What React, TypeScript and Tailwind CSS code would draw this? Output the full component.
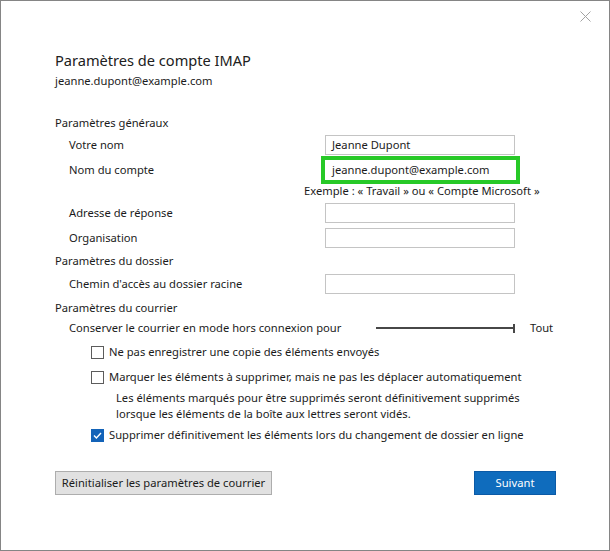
import React from "react";

function Field({ label, value }: { label: string; value?: string }) {
  return (
    <div className="flex h-[20px] items-center">
      <div className="w-[270px] pl-[14px]">{label}</div>
      <div className="flex h-[20px] w-[190px] items-center border border-[#c4c4c4] bg-white pl-[6px]">
        {value}
      </div>
    </div>
  );
}

function Check({ checked, label }: { checked?: boolean; label: string }) {
  return (
    <div className="flex h-[20px] items-center pl-[36px]">
      {checked ? (
        <span className="flex h-[13px] w-[13px] items-center justify-center bg-[#1363b8]">
          <svg width="9" height="7" viewBox="0 0 9 7" fill="none">
            <path d="M1 3.6 L3.4 6 L8 1" stroke="white" strokeWidth="1.4" />
          </svg>
        </span>
      ) : (
        <span className="h-[13px] w-[13px] border border-[#5c5c5c] bg-white" />
      )}
      <span className="ml-[5px]">{label}</span>
    </div>
  );
}

export default function App() {
  return (
    <div
      className="relative h-[551px] w-[610px] border border-[#858585] bg-white text-[11.2px] text-[#1b1b1b]"
      style={{ fontFamily: '"Noto Sans", "Open Sans", sans-serif' }}
    >
      {/* close */}
      <svg className="absolute right-[18px] top-[10px]" width="11" height="11" viewBox="0 0 11 11">
        <path d="M0.5 0.5 L10.5 10.5 M10.5 0.5 L0.5 10.5" stroke="#a3a3a3" strokeWidth="1" />
      </svg>

      <div className="flex flex-col pl-[54px] pt-[48px]">
        <div className="h-[22px] text-[14.6px] leading-[22px] text-[#202020]">Paramètres de compte IMAP</div>
        <div className="mt-[2px] h-[16px] leading-[16px]">jeanne.dupont@example.com</div>

        <div className="mt-[24px] flex h-[20px] items-center">Paramètres généraux</div>
        <div className="mt-[2px]">
          <Field label="Votre nom" value="Jeanne Dupont" />
        </div>
        <div className="mt-[1px] flex h-[28px] items-center">
          <div className="w-[266px] pl-[14px]">Nom du compte</div>
          <div className="flex h-[28px] w-[199px] items-center border-[4px] border-[#27c927] bg-white pl-[7px]">
            jeanne.dupont@example.com
          </div>
        </div>
        <div className="flex h-[13px] items-center pl-[249px] leading-[13px]">
          Exemple : « Travail » ou « Compte Microsoft »
        </div>
        <div className="mt-[6px]">
          <Field label="Adresse de réponse" />
        </div>
        <div className="mt-[5px]">
          <Field label="Organisation" />
        </div>

        <div className="mt-[3px] flex h-[20px] items-center">Paramètres du dossier</div>
        <div className="mt-[3px]">
          <Field label="Chemin d'accès au dossier racine" />
        </div>

        <div className="mt-[4px] flex h-[20px] items-center">Paramètres du courrier</div>
        <div className="flex h-[20px] items-center">
          <div className="w-[321px] pl-[14px]">Conserver le courrier en mode hors connexion pour</div>
          <div className="relative flex h-[10px] w-[139px] items-center">
            <div className="h-[2px] w-[137px] bg-[#474747]" />
            <div className="h-[9px] w-[2px] bg-[#474747]" />
          </div>
          <div className="ml-[15px]">Tout</div>
        </div>
        <div className="mt-[4px]">
          <Check label="Ne pas enregistrer une copie des éléments envoyés" />
        </div>
        <div className="mt-[5px]">
          <Check label="Marquer les éléments à supprimer, mais ne pas les déplacer automatiquement" />
        </div>
        <div className="mt-[3px] pl-[61px] leading-[16px]">
          Les éléments marqués pour être supprimés seront définitivement supprimés
          <br />
          lorsque les éléments de la boîte aux lettres seront vidés.
        </div>
        <div className="mt-[3px]">
          <Check checked label="Supprimer définitivement les éléments lors du changement de dossier en ligne" />
        </div>

        <div className="mt-[26px] flex w-[501px] justify-between">
          <button className="h-[24px] w-[217px] whitespace-nowrap border border-[#adadad] bg-[#e1e1e1] text-[11.2px] text-[#1b1b1b]">
            Réinitialiser les paramètres de courrier
          </button>
          <button className="h-[24px] w-[82px] border border-[#0b5aa6] bg-[#0f6cbd] text-[11.2px] text-white">
            Suivant
          </button>
        </div>
      </div>
    </div>
  );
}
